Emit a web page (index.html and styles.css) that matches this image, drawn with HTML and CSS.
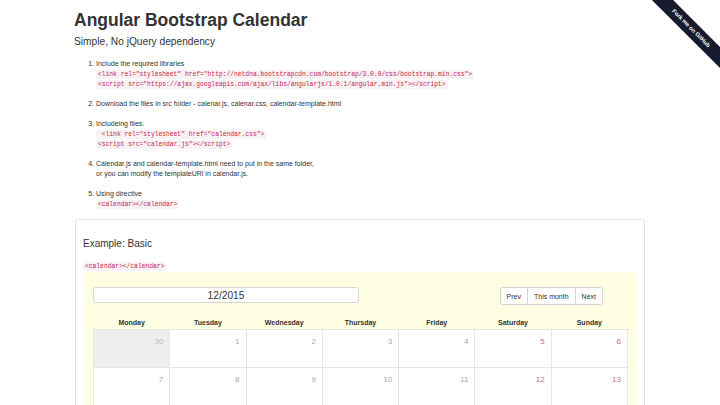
FILE: index.html
```html
<!DOCTYPE html>
<html>
<head>
<meta charset="utf-8">
<title>Angular Bootstrap Calendar</title>
<link rel="stylesheet" href="styles.css">
</head>
<body>
<a class="ribbon-wrap" href="#"><span class="ribbon">Fork me on GitHub</span></a>
<div class="container">
  <h1 class="title">Angular Bootstrap Calendar</h1>
  <p class="lead">Simple, No jQuery dependency</p>
  <ol class="steps">
    <li>Include the required libraries<br><code>&lt;link rel="stylesheet" href="http://netdna.bootstrapcdn.com/bootstrap/3.0.0/css/bootstrap.min.css"&gt;</code><br><code>&lt;script src="https://ajax.googleapis.com/ajax/libs/angularjs/1.0.1/angular.min.js"&gt;&lt;/script&gt;</code></li>
    <li>Download the files in src folder - calenar.js, calenar.css, calendar-template.html</li>
    <li>Includeing files.<br><code>&nbsp;&lt;link rel="stylesheet" href="calendar.css"&gt;</code><br><code>&lt;script src="calendar.js"&gt;&lt;/script&gt;</code></li>
    <li>Calendar.js and calendar-template.html need to put in the same folder,<br>or you can modify the templateURl in calendar.js.</li>
    <li>Using directive<br><code>&lt;calendar&gt;&lt;/calendar&gt;</code></li>
  </ol>
  <div class="panel">
    <h3 class="panel-title">Example: Basic</h3>
    <div class="snippet"><code>&lt;calendar&gt;&lt;/calendar&gt;</code></div>
    <div class="calendar">
      <div class="toolbar">
        <input class="month" type="text" value="12/2015">
        <div class="btn-group">
          <button class="btn">Prev</button>
          <button class="btn">This month</button>
          <button class="btn">Next</button>
        </div>
      </div>
      <table class="grid">
        <thead>
          <tr><th>Monday</th><th>Tuesday</th><th>Wednesday</th><th>Thursday</th><th>Friday</th><th>Saturday</th><th>Sunday</th></tr>
        </thead>
        <tbody>
          <tr><td class="other">30</td><td>1</td><td>2</td><td>3</td><td>4</td><td class="weekend">5</td><td class="weekend">6</td></tr>
          <tr><td>7</td><td>8</td><td>9</td><td>10</td><td>11</td><td class="weekend">12</td><td class="weekend">13</td></tr>
        </tbody>
      </table>
    </div>
  </div>
</div>
</body>
</html>
```
FILE: styles.css
```css
html, body {
  margin: 0;
  padding: 0;
  overflow: hidden;
  background: #fff;
}
body {
  font-family: "Liberation Sans", Arial, sans-serif;
  color: #333;
}
.container {
  padding-left: 74px;
  width: 572px;
}
.title {
  margin: 10px 0 0;
  font-size: 17.5px;
  line-height: 20px;
  font-weight: bold;
  color: #333;
}
.lead {
  margin: 5px 0 0;
  font-size: 10.2px;
  line-height: 14px;
}
.steps {
  margin: 10px 0 0;
  padding-left: 22px;
  font-size: 7px;
  line-height: 10px;
}
.steps li {
  margin-bottom: 10px;
}
code {
  font-family: "Liberation Mono", "DejaVu Sans Mono", monospace;
  font-size: 6.3px;
  line-height: 1;
  color: #c7254e;
  background: #f9f2f4;
  padding: 1px 2px;
  border-radius: 2px;
}
.panel {
  margin-left: 1px;
  box-sizing: border-box;
  width: 570px;
  border: 1px solid #e4e4e4;
  border-radius: 2px;
  padding: 17px 7px 0 7px;
}
.panel-title {
  margin: 0;
  font-size: 10px;
  line-height: 14px;
  font-weight: normal;
}
.snippet {
  margin: 7px 0 2px;
  line-height: 10px;
}
.calendar {
  margin-left: 1px;
  background: #fefee2;
  padding: 15px 9px 20px 9px;
  border-radius: 2px;
}
.toolbar {
  display: flex;
  align-items: flex-start;
  height: 17px;
}
.month {
  box-sizing: border-box;
  width: 266px;
  height: 16px;
  margin: 0;
  padding: 0;
  border: 1px solid #d6d6d6;
  border-radius: 3px;
  background: #fff;
  font-family: "Liberation Sans", Arial, sans-serif;
  font-size: 10.2px;
  color: #333;
  text-align: center;
  outline: none;
}
.btn-group {
  display: flex;
  margin-left: auto;
  margin-right: 25px;
}
.btn {
  box-sizing: border-box;
  height: 18px;
  margin: 0 0 0 -1px;
  padding: 0 6px;
  border: 1px solid #d4d4d4;
  background: #fff;
  font-family: "Liberation Sans", Arial, sans-serif;
  font-size: 7px;
  color: #333;
  border-radius: 0;
}
.btn:first-child {
  margin-left: 0;
  border-radius: 3px 0 0 3px;
}
.btn:last-child {
  border-radius: 0 3px 3px 0;
}
.grid {
  margin-top: 12px;
  width: 535px;
  table-layout: fixed;
  border-collapse: collapse;
}
.grid th {
  height: 13px;
  padding: 0;
  font-size: 7px;
  line-height: 13px;
  font-weight: bold;
  text-align: center;
  vertical-align: top;
}
.grid td {
  height: 38px;
  box-sizing: border-box;
  padding: 7px 6px 0 0;
  border: 1px solid #e6e6e6;
  background: #fff;
  font-size: 8px;
  line-height: 10px;
  color: #a8a8a8;
  text-align: right;
  vertical-align: top;
}
.grid td.other {
  background: #eee;
  color: #bbb;
}
.grid td.weekend {
  color: #c0757a;
}
.ribbon-wrap {
  position: absolute;
  top: 0;
  right: 0;
  width: 80px;
  height: 80px;
  overflow: hidden;
  text-decoration: none;
}
.ribbon {
  position: absolute;
  left: -9px;
  top: 20.5px;
  width: 120px;
  height: 15px;
  transform: rotate(45deg);
  background: #161b2e;
  color: #fff;
  font-family: "Liberation Sans", Arial, sans-serif;
  font-weight: bold;
  font-size: 5.7px;
  line-height: 15px;
  text-align: center;
  white-space: nowrap;
}
```
